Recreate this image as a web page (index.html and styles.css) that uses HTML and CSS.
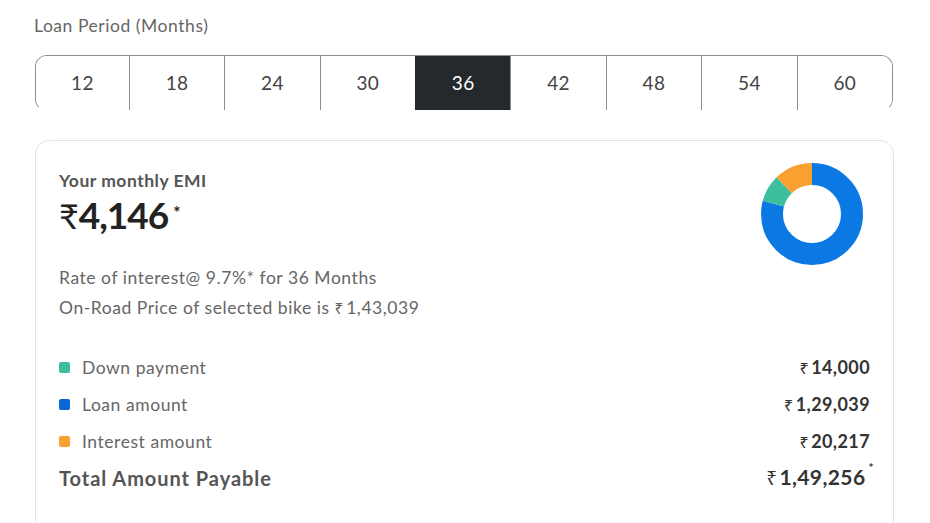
FILE: index.html
```html
<!DOCTYPE html>
<html lang="en">
<head>
<meta charset="utf-8">
<title>EMI Calculator</title>
<link rel="stylesheet" href="styles.css">
</head>
<body>
<main class="emi">
  <div class="period-label">Loan Period (Months)</div>
  <div class="tenure">
    <button class="tenure-opt">12</button>
    <button class="tenure-opt">18</button>
    <button class="tenure-opt">24</button>
    <button class="tenure-opt">30</button>
    <button class="tenure-opt is-active">36</button>
    <button class="tenure-opt">42</button>
    <button class="tenure-opt">48</button>
    <button class="tenure-opt">54</button>
    <button class="tenure-opt">60</button>
  </div>

  <section class="card">
    <div class="card-head">
      <div class="summary">
        <div class="emi-title">Your monthly EMI</div>
        <div class="emi-value"><span class="rs-big">₹</span>4,146<sup class="star">*</sup></div>
        <p class="note">Rate of interest@ 9.7%* for 36 Months</p>
        <p class="note">On-Road Price of selected bike is <span class="rs">₹</span>1,43,039</p>
      </div>
      <svg class="donut" width="102" height="102" viewBox="0 0 102 102">
        <!-- circumference of r=40 is 251.33 -->
        <g transform="rotate(-90 51 51)" fill="none" stroke-width="22">
          <circle cx="51" cy="51" r="40" stroke="#0b78e3" stroke-dasharray="198.66 251.33" stroke-dashoffset="0"/>
          <circle cx="51" cy="51" r="40" stroke="#3dbf9e" stroke-dasharray="21.55 251.33" stroke-dashoffset="-198.66"/>
          <circle cx="51" cy="51" r="40" stroke="#f8a131" stroke-dasharray="31.12 251.33" stroke-dashoffset="-220.21"/>
        </g>
      </svg>
    </div>

    <ul class="breakup">
      <li class="row">
        <span class="key"><i class="dot dot-down"></i>Down payment</span>
        <span class="amt"><span class="rs">₹</span>14,000</span>
      </li>
      <li class="row">
        <span class="key"><i class="dot dot-loan"></i>Loan amount</span>
        <span class="amt"><span class="rs">₹</span>1,29,039</span>
      </li>
      <li class="row">
        <span class="key"><i class="dot dot-int"></i>Interest amount</span>
        <span class="amt"><span class="rs">₹</span>20,217</span>
      </li>
      <li class="row total">
        <span class="key">Total Amount Payable</span>
        <span class="amt"><span class="rs">₹</span>1,49,256<sup class="star-sm">*</sup></span>
      </li>
    </ul>
  </section>
</main>
</body>
</html>
```

FILE: styles.css
```css
* { box-sizing: border-box; }

html, body {
  margin: 0;
  background: #fff;
}

body {
  font-family: Lato, "Open Sans", "Liberation Sans", sans-serif;
  color: #333;
  overflow: hidden;
}

.emi {
  padding: 14px 37px 0 35px;
}

.period-label {
  font-size: 17.5px;
  letter-spacing: 0.55px;
  line-height: 24px;
  color: #666;
  margin-left: -1px;
}

.tenure {
  margin-top: 17px;
  display: grid;
  grid-template-columns: 93fr repeat(8, 95.5fr);
  height: 56px;
  border: 1px solid #8d8d8d;
  border-bottom-color: transparent;
  border-radius: 12px;
  overflow: hidden;
}

.tenure-opt {
  font-family: inherit;
  font-size: 19px;
  letter-spacing: 0.4px;
  color: #444;
  background: #fff;
  border: 0;
  border-left: 1px solid #8d8d8d;
  padding: 0 0 2px;
  cursor: pointer;
}

.tenure-opt:first-child { border-left: 0; }

.tenure-opt.is-active {
  background: #25282d;
  color: #fff;
  border-left-color: #25282d;
}

.card {
  margin-top: 29px;
  margin-right: -1px;
  border: 1px solid #e3e3e3;
  border-radius: 14px;
  padding: 28px 23px 30px 23px;
  height: 420px;
}

.card-head {
  display: flex;
  justify-content: space-between;
  align-items: flex-start;
}

.emi-title {
  font-size: 17.5px;
  letter-spacing: 0.5px;
  font-weight: 700;
  line-height: 24px;
  color: #555;
}

.emi-value {
  font-size: 37px;
  font-weight: 700;
  line-height: 44px;
  color: #222;
  letter-spacing: -1px;
}

.rs-big {
  font-weight: 400;
  font-size: 0.92em;
  margin-right: 1px;
}

.star {
  font-size: 17px;
  vertical-align: top;
  position: relative;
  top: -2px;
  margin-left: 5px;
}

.note {
  margin: 0;
  font-size: 17.5px;
  letter-spacing: 0.55px;
  line-height: 30px;
  color: #666;
}

.note:first-of-type { margin-top: 25px; }

.rs {
  font-family: "Noto Sans", "DejaVu Sans", sans-serif;
  font-size: 0.9em;
  font-weight: 400;
  margin-right: 2px;
}

.donut {
  flex: none;
  margin-top: -6px;
  margin-right: 7px;
}

.breakup {
  list-style: none;
  margin: 26px 0 0;
  padding: 0;
}

.row {
  display: flex;
  justify-content: space-between;
  align-items: center;
  height: 37px;
  font-size: 17.5px;
}

.key {
  display: flex;
  align-items: center;
  color: #666;
  letter-spacing: 0.55px;
}

.dot {
  width: 11px;
  height: 11px;
  border-radius: 2px;
  margin-right: 12px;
  display: inline-block;
}

.dot-down { background: #3dbf9e; }
.dot-loan { background: #0b66d6; }
.dot-int { background: #f8a131; }

.amt {
  font-size: 18px;
  font-weight: 700;
  color: #333;
  letter-spacing: 0.4px;
}

.total { margin-top: -1px; }

.total .key {
  font-size: 20px;
  font-weight: 700;
  color: #555;
  letter-spacing: 0.95px;
}

.total .amt {
  font-size: 21px;
  position: relative;
  margin-right: -4px;
}

.star-sm {
  font-size: 12px;
  vertical-align: top;
  position: relative;
  top: -4px;
  margin-left: 3px;
}
```
